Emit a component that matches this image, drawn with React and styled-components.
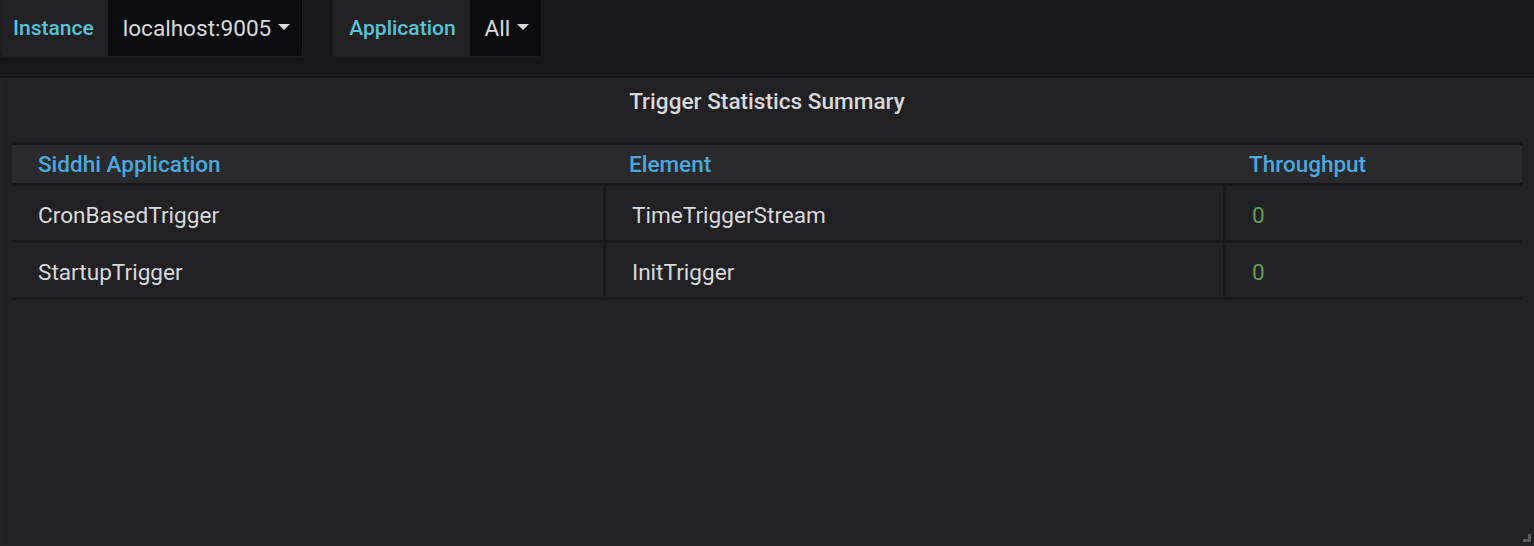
import styled, { createGlobalStyle } from 'styled-components';

const GlobalStyle = createGlobalStyle`
  html, body {
    margin: 0;
    padding: 0;
    background: #161719;
    font-family: Roboto, 'Liberation Sans', sans-serif;
  }
  * {
    box-sizing: border-box;
  }
`;

const rows = [
  { app: 'CronBasedTrigger', element: 'TimeTriggerStream', throughput: 0 },
  { app: 'StartupTrigger', element: 'InitTrigger', throughput: 0 },
];

const App = () => {
  return (
    <>
      <GlobalStyle />
      <Page>
        <TopBar>
          <VarGroup>
            <VarLabel $pl={12}>Instance</VarLabel>
            <VarValue>
              localhost:9005
              <Caret />
            </VarValue>
          </VarGroup>
          <VarGroup>
            <VarLabel $pl={16}>Application</VarLabel>
            <VarValue>
              All
              <Caret />
            </VarValue>
          </VarGroup>
        </TopBar>
        <Panel>
          <Title>Trigger Statistics Summary</Title>
          <Table>
            <HeadRow>
              <HeadCell>Siddhi Application</HeadCell>
              <HeadCell>Element</HeadCell>
              <HeadCell>Throughput</HeadCell>
            </HeadRow>
            {rows.map((r) => (
              <Row key={r.app}>
                <Cell>{r.app}</Cell>
                <Cell $sep>{r.element}</Cell>
                <Cell $sep $value>
                  {r.throughput}
                </Cell>
              </Row>
            ))}
          </Table>
          <ResizeHandle />
        </Panel>
      </Page>
    </>
  );
};

export default App;

const Page = styled.div`
  display: flex;
  flex-direction: column;
  height: 546px;
  overflow: hidden;
`;

const TopBar = styled.div`
  display: flex;
  align-items: flex-start;
  gap: 29px;
  height: 78px;
  flex-shrink: 0;
`;

const VarGroup = styled.div`
  display: flex;
  height: 57px;
  border-radius: 0 0 4px 4px;
  overflow: hidden;
  border: 1px solid #1e1e21;
  border-top: none;
`;

const VarLabel = styled.div`
  display: flex;
  align-items: center;
  padding: 0 14px 0 ${(p) => p.$pl}px;
  background: #212124;
  color: #56c3d8;
  font-size: 21px;
  font-weight: 500;
`;

const VarValue = styled.div`
  display: flex;
  align-items: center;
  gap: 7px;
  padding: 0 12px 0 15px;
  background: #0b0c0e;
  color: #d8d9da;
  font-size: 22.6px;
`;

const Caret = styled.span`
  width: 0;
  height: 0;
  border-left: 6px solid transparent;
  border-right: 6px solid transparent;
  border-top: 6px solid #d8d9da;
  margin-top: -2px;
`;

const Panel = styled.div`
  position: relative;
  flex: 1;
  background: #212124;
  border: 1px solid #242427;
  padding: 0 11px;
`;

const Title = styled.div`
  text-align: center;
  color: #d8d9da;
  font-size: 22.6px;
  font-weight: 500;
  line-height: 26px;
  padding: 10px 0 27px;
`;

const Table = styled.div`
  border-top: 3px solid #161719;
`;

const HeadRow = styled.div`
  display: grid;
  grid-template-columns: 591px 620px 1fr;
  height: 41px;
  background: #2a2a2d;
  border-bottom: 3px solid #161719;
`;

const HeadCell = styled.div`
  display: flex;
  align-items: center;
  padding-left: 26px;
  color: #4aa8df;
  font-size: 22.5px;
  font-weight: 500;
`;

const Row = styled.div`
  display: grid;
  grid-template-columns: 591px 620px 1fr;
  height: 57px;
  border-bottom: 3px solid #19191b;
`;

const Cell = styled.div`
  display: flex;
  align-items: center;
  padding: 4px 0 0 26px;
  border-left: ${(p) => (p.$sep ? '3px solid #19191b' : 'none')};
  color: ${(p) => (p.$value ? '#629e51' : '#d8d9da')};
  font-size: 22.6px;
`;

const ResizeHandle = styled.div`
  position: absolute;
  right: 2px;
  bottom: 3px;
  width: 8px;
  height: 8px;
  border-right: 3px solid #5a5a5e;
  border-bottom: 3px solid #5a5a5e;
`;
